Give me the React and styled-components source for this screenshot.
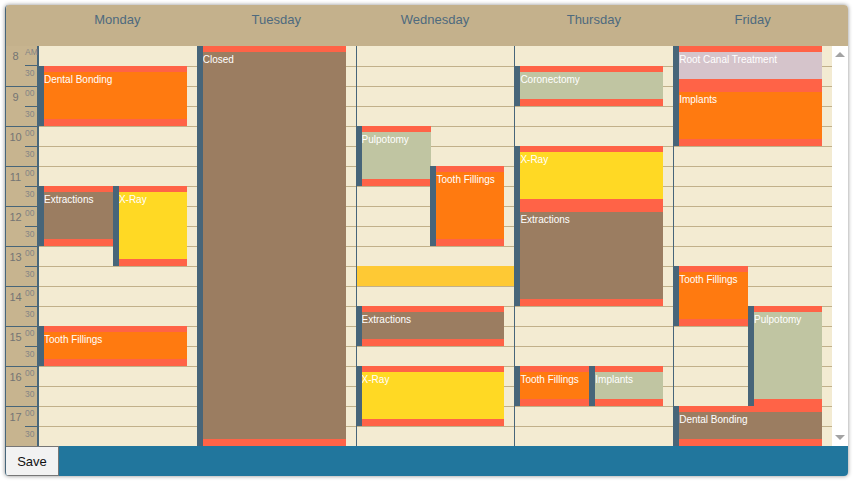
// Package Imports
import React from 'react';
import styled, { createGlobalStyle } from 'styled-components';

const SLATE = '#476579';
const TOMATO = '#ff6347';
const SLOT = 20;

const COLORS = {
	orange: '#ff7a10',
	yellow: '#ffd924',
	sage: '#c0c5a2',
	brown: '#9b7d61',
	pink: '#d5c4cb'
};

const DAYS = ['Monday', 'Tuesday', 'Wednesday', 'Thursday', 'Friday'];
const HOURS = [8, 9, 10, 11, 12, 13, 14, 15, 16, 17];

const EVENTS = {
	Monday: [
		{ title: 'Dental Bonding', start: 1, len: 3, color: 'orange', pos: 'full' },
		{ title: 'Extractions', start: 7, len: 3, color: 'brown', pos: 'left' },
		{ title: 'X-Ray', start: 7, len: 4, color: 'yellow', pos: 'right' },
		{ title: 'Tooth Fillings', start: 14, len: 2, color: 'orange', pos: 'full' }
	],
	Tuesday: [
		{ title: 'Closed', start: 0, len: 20, color: 'brown', pos: 'full' }
	],
	Wednesday: [
		{ title: 'Pulpotomy', start: 4, len: 3, color: 'sage', pos: 'left' },
		{ title: 'Tooth Fillings', start: 6, len: 4, color: 'orange', pos: 'right' },
		{ title: 'Extractions', start: 13, len: 2, color: 'brown', pos: 'full' },
		{ title: 'X-Ray', start: 16, len: 3, color: 'yellow', pos: 'full' }
	],
	Thursday: [
		{ title: 'Coronectomy', start: 1, len: 2, color: 'sage', pos: 'full' },
		{ title: 'X-Ray', start: 5, len: 3, color: 'yellow', pos: 'full' },
		{ title: 'Extractions', start: 8, len: 5, color: 'brown', pos: 'full' },
		{ title: 'Tooth Fillings', start: 16, len: 2, color: 'orange', pos: 'left' },
		{ title: 'Implants', start: 16, len: 2, color: 'sage', pos: 'right' }
	],
	Friday: [
		{ title: 'Root Canal Treatment', start: 0, len: 2, color: 'pink', pos: 'full' },
		{ title: 'Implants', start: 2, len: 3, color: 'orange', pos: 'full' },
		{ title: 'Tooth Fillings', start: 11, len: 3, color: 'orange', pos: 'left' },
		{ title: 'Pulpotomy', start: 13, len: 5, color: 'sage', pos: 'right' },
		{ title: 'Dental Bonding', start: 18, len: 2, color: 'brown', pos: 'full' }
	]
};

// highlighted band (no booking, just a marked slot)
const BANDS = {
	Wednesday: [{ start: 11, len: 1 }]
};

const POSITIONS = {
	full: 'left: -1px; right: 10px;',
	left: 'left: -1px; right: calc(50% + 5px);',
	right: 'left: calc(50% - 5px); right: 10px;'
};

const GlobalStyle = createGlobalStyle`
	html, body {
		margin: 0;
		padding: 0;
		background: #ffffff;
		font-family: 'Liberation Sans', Arial, sans-serif;
	}
`;

const Frame = styled.div`
	margin: 5px;
	width: 843px;
	height: 471px;
	display: flex;
	flex-direction: column;
	border-radius: 4px;
	border-left: 1px solid ${SLATE};
	box-sizing: border-box;
	overflow: hidden;
	box-shadow: 0 0 4px rgba(0, 0, 0, 0.45);
`;

const Header = styled.div`
	height: 41px;
	flex: none;
	display: grid;
	grid-template-columns: 32px repeat(5, 1fr) 16px;
	background: #c4b18c;
`;

const DayLabel = styled.div`
	text-align: center;
	padding-top: 7px;
	font-size: 13px;
	color: #4e6a7e;
`;

const Body = styled.div`
	height: 400px;
	flex: none;
	display: grid;
	grid-template-columns: 32px repeat(5, 1fr) 16px;
`;

const TimeColumn = styled.div`
	background: #c7b48f;
	border-right: 1px solid ${SLATE};
	display: flex;
	flex-direction: column;
`;

const HourCell = styled.div`
	height: 40px;
	display: flex;
	box-sizing: border-box;
	border-top: ${({ first }) => first ? 'none' : `1px solid ${SLATE}`};
`;

const HourLabel = styled.div`
	flex: 1;
	text-align: center;
	padding-top: 4px;
	font-size: 11px;
	color: #747474;
`;

const MinuteStack = styled.div`
	width: 12px;
	display: flex;
	flex-direction: column;
`;

const MinuteCell = styled.div`
	height: ${({ half }) => half ? '20px' : '19px'};
	box-sizing: border-box;
	padding-top: ${({ half }) => half ? '2px' : '1px'};
	font-size: 8.5px;
	color: #858585;
	white-space: nowrap;
	border-top: ${({ half }) => half ? `1px solid ${SLATE}` : 'none'};
`;

const DayColumn = styled.div`
	position: relative;
	background: #f3ebd2;
	border-left: 1px solid ${SLATE};
	display: flex;
	flex-direction: column;
	&:first-of-type {
		border-left: none;
	}
`;

const Slot = styled.div`
	height: ${SLOT}px;
	box-sizing: border-box;
	border-top: ${({ first }) => first ? 'none' : '1px solid #c1b08a'};
`;

const Band = styled.div`
	position: absolute;
	left: 0;
	right: 0;
	background: #fec934;
`;

const Event = styled.div`
	position: absolute;
	${({ pos }) => POSITIONS[pos]}
	display: flex;
	border-left: 6px solid ${SLATE};
	box-sizing: border-box;
`;

const EventInner = styled.div`
	flex: 1;
	display: flex;
	flex-direction: column;
	border-top: 6px solid ${TOMATO};
	border-bottom: 7px solid ${TOMATO};
	background: ${({ color }) => COLORS[color]};
`;

const EventTitle = styled.div`
	padding-top: 2px;
	font-size: 10px;
	line-height: 12px;
	color: #ffffff;
	white-space: nowrap;
	overflow: hidden;
`;

const Scrollbar = styled.div`
	background: #ffffff;
	display: flex;
	flex-direction: column;
	justify-content: space-between;
	align-items: center;
	padding: 6px 0 6px;
`;

const Arrow = styled.div`
	width: 0;
	height: 0;
	border-left: 5px solid transparent;
	border-right: 5px solid transparent;
	${({ down }) => down
		? 'border-top: 5px solid #a3a3a3;'
		: 'border-bottom: 5px solid #a3a3a3;'}
`;

const Footer = styled.div`
	flex: 1;
	display: flex;
	background: #21769d;
`;

const SaveButton = styled.button`
	width: 53px;
	margin: 0;
	padding: 0;
	background: #f2f2f2;
	border: 1px solid #767676;
	border-left: none;
	font-family: 'Liberation Sans', Arial, sans-serif;
	font-size: 13px;
	color: #111111;
	cursor: pointer;
`;

const CalendarEvent = ({ event }) => (
	<Event
		pos={event.pos}
		style={{ top: event.start * SLOT, height: event.len * SLOT }}
	>
		<EventInner color={event.color}>
			<EventTitle>{event.title}</EventTitle>
		</EventInner>
	</Event>
);

const App = () => {
	const slots = Array.from({ length: HOURS.length * 2 }, (_, i) => i);

	return (
		<>
			<GlobalStyle />
			<Frame>
				<Header>
					<div />
					{DAYS.map((day) => <DayLabel key={day}>{day}</DayLabel>)}
					<div />
				</Header>
				<Body>
					<TimeColumn>
						{HOURS.map((hour, idx) => (
							<HourCell key={hour} first={idx === 0}>
								<HourLabel>{hour}</HourLabel>
								<MinuteStack>
									<MinuteCell>{idx === 0 ? 'AM' : '00'}</MinuteCell>
									<MinuteCell half>30</MinuteCell>
								</MinuteStack>
							</HourCell>
						))}
					</TimeColumn>
					{DAYS.map((day) => (
						<DayColumn key={day}>
							{slots.map((i) => <Slot key={i} first={i === 0} />)}
							{(BANDS[day] || []).map((band, i) => (
								<Band key={i} style={{ top: band.start * SLOT, height: band.len * SLOT }} />
							))}
							{EVENTS[day].map((event, i) => <CalendarEvent key={i} event={event} />)}
						</DayColumn>
					))}
					<Scrollbar>
						<Arrow />
						<Arrow down />
					</Scrollbar>
				</Body>
				<Footer>
					<SaveButton>Save</SaveButton>
				</Footer>
			</Frame>
		</>
	);
};

export default App;
